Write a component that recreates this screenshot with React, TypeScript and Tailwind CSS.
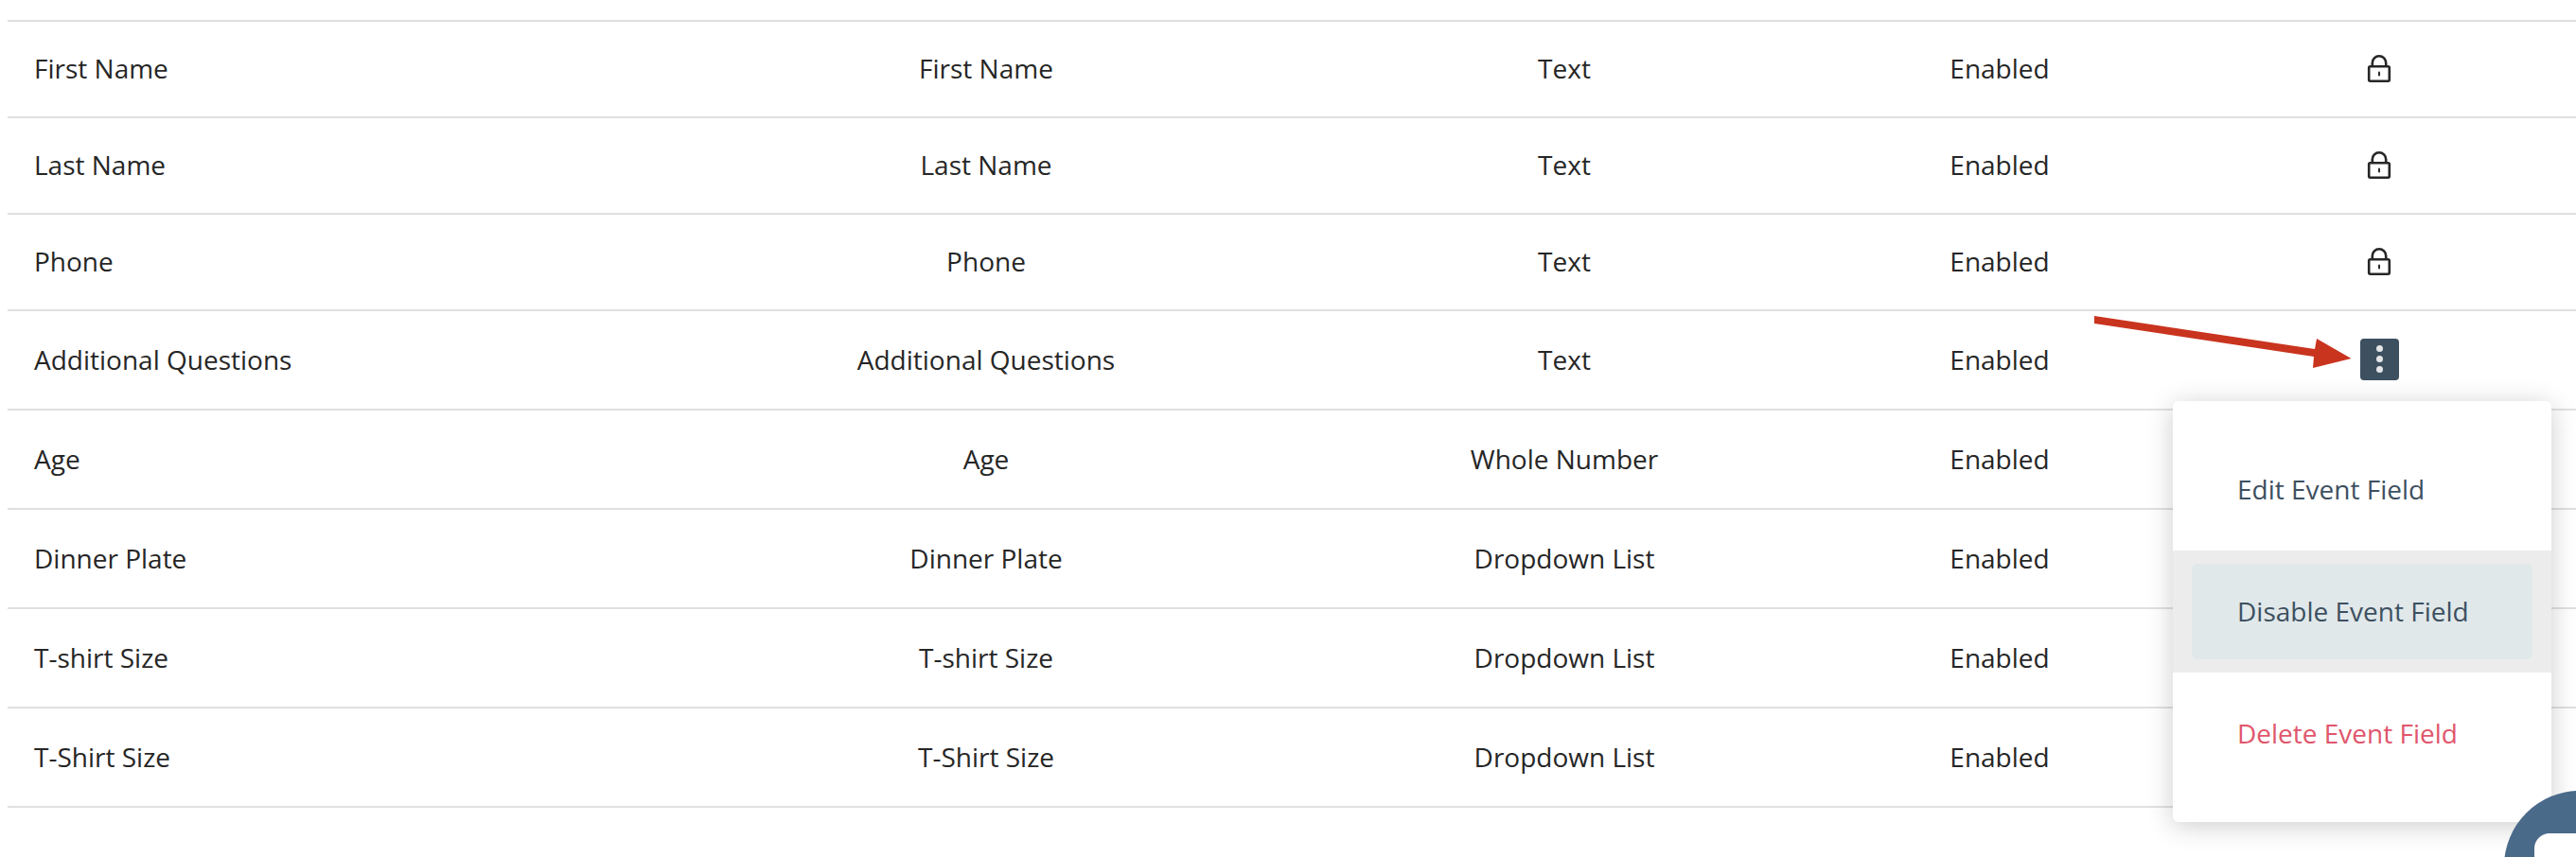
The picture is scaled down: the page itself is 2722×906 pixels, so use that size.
import React from "react";

const rows = [
  { name: "First Name", type: "Text", locked: true },
  { name: "Last Name", type: "Text", locked: true },
  { name: "Phone", type: "Text", locked: true },
  { name: "Additional Questions", type: "Text", active: true },
  { name: "Age", type: "Whole Number" },
  { name: "Dinner Plate", type: "Dropdown List" },
  { name: "T-shirt Size", type: "Dropdown List" },
  { name: "T-Shirt Size", type: "Dropdown List" },
];

function Lock() {
  return (
    <svg width="26" height="30" viewBox="0 0 26 30" fill="none" className="block">
      <path d="M5.8 13V9.4a7.2 7.2 0 0 1 14.4 0V13" stroke="#262626" strokeWidth="2.6" />
      <rect x="2.2" y="13.2" width="21.6" height="15.5" rx="1.4" stroke="#262626" strokeWidth="2.6" />
      <rect x="12" y="18.5" width="2" height="5" rx="1" fill="#262626" />
    </svg>
  );
}

function MoreButton() {
  return (
    <div className="flex h-[44px] w-[41px] flex-col items-center justify-center gap-[4px] rounded-[4px] bg-[#3d5060]">
      <span className="h-[7px] w-[7px] rounded-full bg-[#e4e6e8]" />
      <span className="h-[7px] w-[7px] rounded-full bg-[#e4e6e8]" />
      <span className="h-[7px] w-[7px] rounded-full bg-[#e4e6e8]" />
    </div>
  );
}

function Row({ r, index }: { r: (typeof rows)[number]; index: number }) {
  return (
    <div
      className={
        "grid grid-cols-[716px_636px_586px_334px_1fr] items-center border-b-2 border-[#e0e0e0] pb-[2px] " +
        (index < 3 ? "h-[102px]" : "h-[105px]")
      }
    >
      <div className="pl-[28px]">{r.name}</div>
      <div className="text-center">{r.name}</div>
      <div className="text-center">{r.type}</div>
      <div className="text-center">Enabled</div>
      <div className="flex justify-center pl-[26px]">
        {r.locked ? <Lock /> : r.active ? <MoreButton /> : null}
      </div>
    </div>
  );
}

export default function App() {
  return (
    <div
      className="relative h-[906px] w-[2722px] overflow-hidden bg-white pl-[8px] pt-[21px] text-[28px] leading-[36px] text-[#262626]"
      style={{ fontFamily: '"Open Sans", sans-serif' }}
    >
      <div className="border-t-2 border-[#e0e0e0]">
        {rows.map((r, i) => (
          <Row key={i} r={r} index={i} />
        ))}
      </div>

      <svg className="absolute left-[2200px] top-[330px]" width="300" height="70" viewBox="0 0 300 70">
        <polygon
          points="13,4 246,39 248,28 284.5,49 244,59 245,47 13,12"
          fill="#c9341f"
        />
      </svg>

      <div className="absolute left-[2296px] top-[424px] w-[400px] rounded-[6px] bg-white py-[29px] text-[#3d5060] shadow-[0_4px_28px_rgba(0,0,0,0.2)]">
        <div className="flex h-[129px] items-center pb-[1px] pl-[68px]">Edit Event Field</div>
        <div className="flex h-[129px] items-center bg-[#ececec] px-[20px]">
          <div className="flex h-[101px] w-full items-center rounded-[6px] bg-[#e1e8ea] pb-[2px] pl-[48px]">
            Disable Event Field
          </div>
        </div>
        <div className="flex h-[129px] items-center pb-[2px] pl-[68px] text-[#e0566c]">Delete Event Field</div>
      </div>

      <div className="absolute left-[2646px] top-[836px] h-[160px] w-[160px] rounded-full bg-[#4a6a8a]">
        <div className="absolute left-[32px] top-[45px] h-[80px] w-[90px] rounded-[16px] bg-white" />
      </div>
    </div>
  );
}
